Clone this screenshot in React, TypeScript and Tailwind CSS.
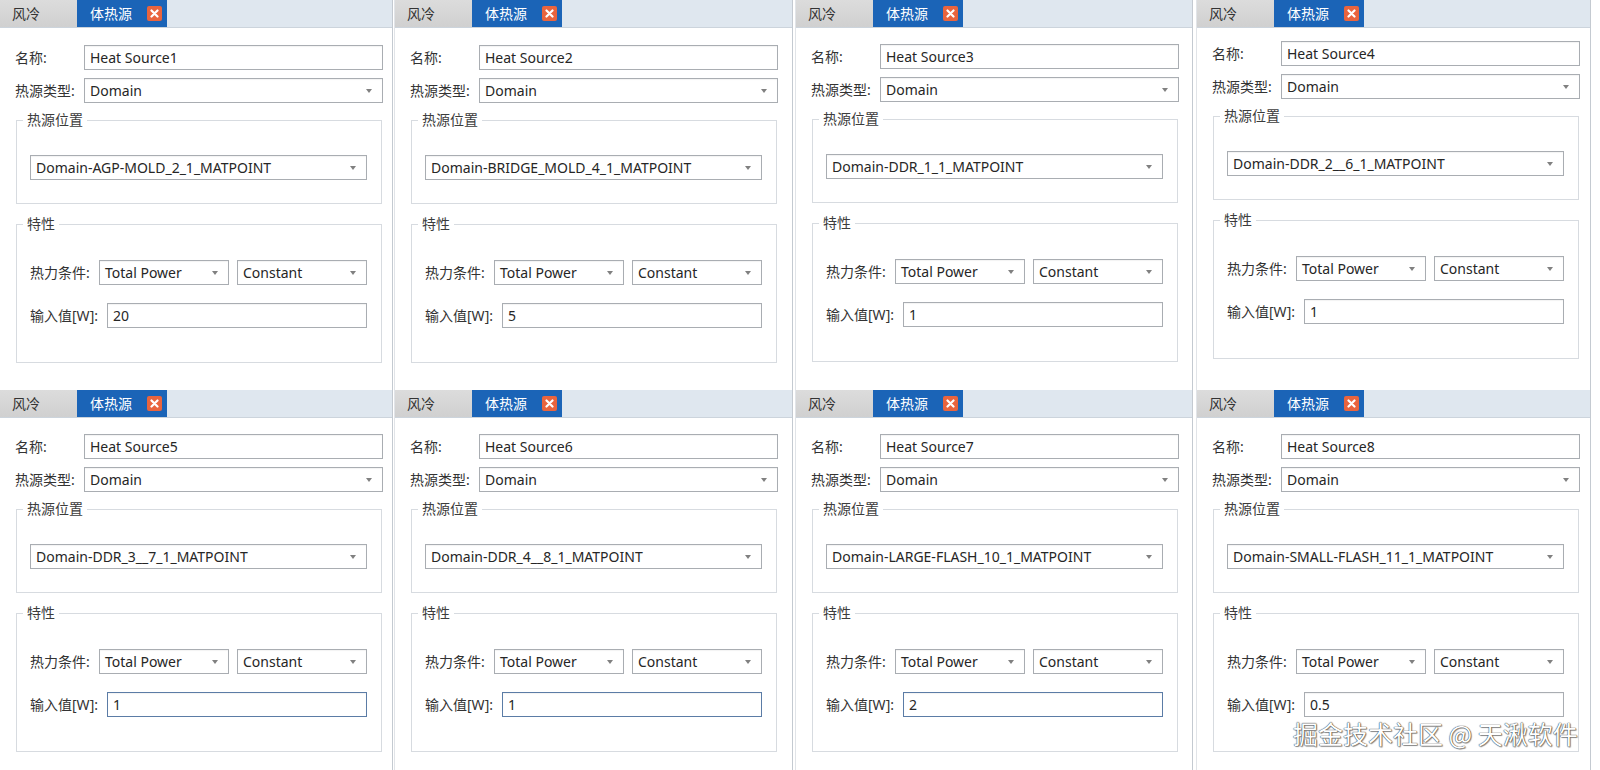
import React from 'react';

type HeatSource = {
  name: string;
  location: string;
  value: string;
  focused?: boolean;
  top: string;
};

// column width and window width for each of the four columns
const columns = [
  { col: 'w-[394px]', win: 'w-[393px]' },
  { col: 'w-[401px]', win: 'w-[399px]' },
  { col: 'w-[401px]', win: 'w-[398px]' },
  { col: 'w-[404px]', win: 'w-[395px]' },
];

const topRow: HeatSource[] = [
  { name: 'Heat Source1', location: 'Domain-AGP-MOLD_2_1_MATPOINT', value: '20', top: 'pt-[17px]' },
  { name: 'Heat Source2', location: 'Domain-BRIDGE_MOLD_4_1_MATPOINT', value: '5', top: 'pt-[17px]' },
  { name: 'Heat Source3', location: 'Domain-DDR_1_1_MATPOINT', value: '1', top: 'pt-[16px]' },
  { name: 'Heat Source4', location: 'Domain-DDR_2__6_1_MATPOINT', value: '1', top: 'pt-[13px]' },
];

const bottomRow: HeatSource[] = [
  { name: 'Heat Source5', location: 'Domain-DDR_3__7_1_MATPOINT', value: '1', focused: true, top: 'pt-[16px]' },
  { name: 'Heat Source6', location: 'Domain-DDR_4__8_1_MATPOINT', value: '1', focused: true, top: 'pt-[16px]' },
  { name: 'Heat Source7', location: 'Domain-LARGE-FLASH_10_1_MATPOINT', value: '2', focused: true, top: 'pt-[16px]' },
  { name: 'Heat Source8', location: 'Domain-SMALL-FLASH_11_1_MATPOINT', value: '0.5', top: 'pt-[16px]' },
];

const Label: React.FC<{ text: string; width: string }> = ({ text, width }) => (
  <span className={`${width} flex-none text-[14px] text-[#333]`}>{text}</span>
);

const TextBox: React.FC<{ value: string; width: string; focused?: boolean }> = ({ value, width, focused }) => (
  <div
    className={`${width} h-[25px] flex items-center pl-[5px] bg-white border ${
      focused ? 'border-[#5b7ca6]' : 'border-[#a9adb2]'
    } shadow-[inset_0_1px_1px_rgba(0,0,0,0.05)]`}
  >
    <span className="text-[14px] text-[#262626] leading-none">{value}</span>
  </div>
);

const Select: React.FC<{ value: string; width: string }> = ({ value, width }) => (
  <div
    className={`${width} h-[25px] flex items-center justify-between pl-[5px] pr-[10px] bg-white border border-[#a9adb2] shadow-[inset_0_1px_1px_rgba(0,0,0,0.05)]`}
  >
    <span className="text-[14px] text-[#262626] leading-none">{value}</span>
    <span className="w-0 h-0 border-x-[3.5px] border-x-transparent border-t-[4px] border-t-[#808080]" />
  </div>
);

const GroupBox: React.FC<{ title: string; className: string; children: React.ReactNode }> = ({
  title,
  className,
  children,
}) => (
  <fieldset className={`ml-[1px] w-[366px] border border-[#d7dbe0] ${className}`}>
    <legend className="ml-[6px] px-[4px] text-[14px] leading-[20px] text-[#3c3c3c]">{title}</legend>
    {children}
  </fieldset>
);

const TabStrip: React.FC = () => (
  <div className="flex h-[28px] bg-[#dfe7ef] border-b border-[#ccd4dc]">
    <div className="w-[77px] flex items-center pl-[12px] bg-gradient-to-b from-[#dcdcdc] to-[#d0d0d0] text-[14px] text-[#333]">
      风冷
    </div>
    <div className="w-[90px] flex items-center pl-[13px] bg-[#1b64b7] text-[14px] text-white">
      体热源
      <span className="ml-[15px] w-[15px] h-[15px] rounded-[2px] bg-[#e9643e] flex items-center justify-center">
        <svg width="9" height="9" viewBox="0 0 9 9">
          <path d="M1.5 1.5 L7.5 7.5 M7.5 1.5 L1.5 7.5" stroke="#fff" strokeWidth="2.2" strokeLinecap="round" />
        </svg>
      </span>
    </div>
  </div>
);

const SourcePanel: React.FC<{ src: HeatSource; col: string; win: string; first: boolean }> = ({
  src,
  col,
  win,
  first,
}) => (
  <div className={`${col} flex-none h-full bg-white`}>
    <div className={`${win} h-full border-r border-[#c4cad1] ${first ? '' : 'border-l border-l-[#e1e4e8]'}`}>
      <TabStrip />
      <div className={`pl-[15px] ${src.top}`}>
        <div className="flex items-center">
          <Label text="名称:" width="w-[69px]" />
          <TextBox value={src.name} width="w-[299px]" />
        </div>
        <div className="flex items-center mt-[8px]">
          <Label text="热源类型:" width="w-[69px]" />
          <Select value="Domain" width="w-[299px]" />
        </div>

        <GroupBox title="热源位置" className="mt-[7px] pb-[23px]">
          <div className="ml-[13px] mt-[25px]">
            <Select value={src.location} width="w-[337px]" />
          </div>
        </GroupBox>

        <GroupBox title="特性" className="mt-[10px] pb-[34px]">
          <div className="ml-[13px] mt-[26px] flex items-center">
            <Label text="热力条件:" width="w-[69px]" />
            <Select value="Total Power" width="w-[130px]" />
            <div className="ml-[8px]">
              <Select value="Constant" width="w-[130px]" />
            </div>
          </div>
          <div className="ml-[13px] mt-[18px] flex items-center">
            <Label text="输入值[W]:" width="w-[77px]" />
            <TextBox value={src.value} width="w-[260px]" focused={src.focused} />
          </div>
        </GroupBox>
      </div>
    </div>
  </div>
);

const Row: React.FC<{ items: HeatSource[]; height: string }> = ({ items, height }) => (
  <div className={`flex ${height}`}>
    {items.map((src, i) => (
      <SourcePanel key={src.name} src={src} col={columns[i].col} win={columns[i].win} first={i === 0} />
    ))}
  </div>
);

export default function App() {
  return (
    <div className="relative w-[1600px] h-[770px] overflow-hidden bg-white font-['Noto_Sans','Noto_Sans_CJK_SC',sans-serif]">
      <Row items={topRow} height="h-[390px]" />
      <Row items={bottomRow} height="h-[380px]" />

      {/* site watermark */}
      <div className="absolute left-[1293px] top-[718px] text-[25px] leading-[30px] text-white font-['Noto_Sans_CJK_SC',sans-serif] [text-shadow:0_0_1px_#333,0_0_1px_#333,1px_1px_1px_rgba(0,0,0,0.4)]">
        掘金技术社区 @ 天湫软件
      </div>
    </div>
  );
}
